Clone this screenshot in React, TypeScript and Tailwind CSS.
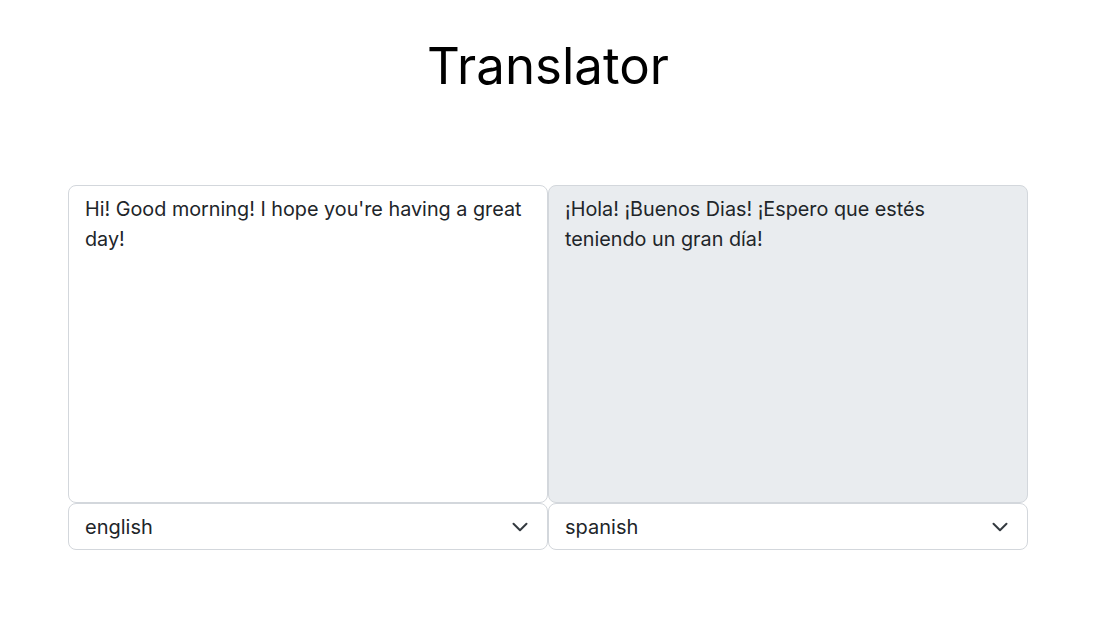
import React from 'react';

const Chevron = () => (
  <svg width="16" height="10" viewBox="0 0 16 10" fill="none" className="shrink-0">
    <path d="M1.5 1.8 8 8.2l6.5-6.4" stroke="#343a40" strokeWidth="2" strokeLinecap="round" strokeLinejoin="round" />
  </svg>
);

const LangSelect = ({ value }: { value: string }) => (
  <div className="flex items-center justify-between h-[47px] pl-4 pr-[19px] border border-[#d3d7dc] rounded-lg bg-white text-xl text-[#212529]">
    <span>{value}</span>
    <Chevron />
  </div>
);

const Panel = ({ text, lang, readOnly }: { text: string; lang: string; readOnly?: boolean }) => (
  <div className="flex flex-col">
    <div
      className={`h-[318px] px-4 py-2 border border-[#d3d7dc] rounded-lg text-[19.8px] leading-[30px] text-[#212529] ${
        readOnly ? 'bg-[#e9ecef]' : 'bg-white'
      }`}
    >
      {text}
    </div>
    <LangSelect value={lang} />
  </div>
);

export default function App() {
  return (
    <div className="min-h-[618px] bg-white font-['Inter',sans-serif] text-[#212529]">
      <div className="w-[960px] ml-[68px]">
        <h1 className="pt-[35px] text-center text-[51px] leading-[1.2] font-normal text-black">Translator</h1>
        <div className="grid grid-cols-2 mt-[89px]">
          <Panel text="Hi! Good morning! I hope you're having a great day!" lang="english" />
          <Panel text="¡Hola! ¡Buenos Dias! ¡Espero que estés teniendo un gran día!" lang="spanish" readOnly />
        </div>
      </div>
    </div>
  );
}
